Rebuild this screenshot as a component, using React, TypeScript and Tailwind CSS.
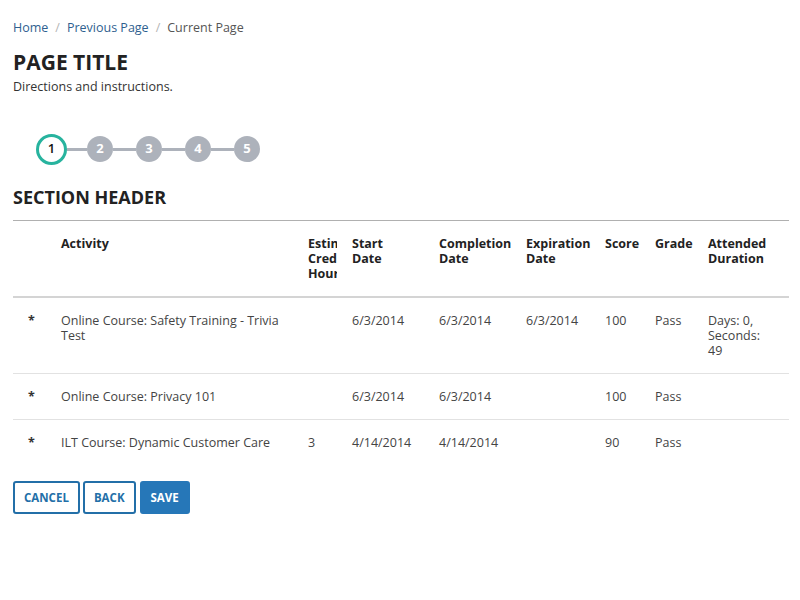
import { Fragment } from "react";

const steps = [1, 2, 3, 4, 5];

const rows = [
  {
    activity: "Online Course: Safety Training - Trivia Test",
    credit: "",
    start: "6/3/2014",
    completion: "6/3/2014",
    expiration: "6/3/2014",
    score: "100",
    grade: "Pass",
    duration: "Days: 0, Seconds: 49",
  },
  {
    activity: "Online Course: Privacy 101",
    credit: "",
    start: "6/3/2014",
    completion: "6/3/2014",
    expiration: "",
    score: "100",
    grade: "Pass",
    duration: "",
  },
  {
    activity: "ILT Course: Dynamic Customer Care",
    credit: "3",
    start: "4/14/2014",
    completion: "4/14/2014",
    expiration: "",
    score: "90",
    grade: "Pass",
    duration: "",
  },
];

const widths = [33, 247, 44, 87, 87, 79, 50, 53, 96];

const th = "py-[15px] pl-[15px] pr-[12px]";
const td = "py-[15px] pl-[15px]";

export default function App() {
  return (
    <div className="min-h-screen bg-white pl-[13px] pr-[11px] text-[#333] [font-family:'Open_Sans',sans-serif]">
      <nav className="flex h-[54px] items-start gap-[7px] pt-[19px] text-[12.5px] leading-[17px]">
        <a className="text-[#2f5f8f]">Home</a>
        <span className="text-[#b5b5b5]">/</span>
        <a className="text-[#2f5f8f]">Previous Page</a>
        <span className="text-[#b5b5b5]">/</span>
        <span className="text-[#555]">Current Page</span>
      </nav>

      <h1 className="text-[21px] font-bold leading-[17px] text-[#222]">PAGE TITLE</h1>
      <p className="mt-[7px] text-[12.5px] leading-[17px]">Directions and instructions.</p>

      <div className="mt-[37px] ml-[23px] flex h-[34px] items-center">
        {steps.map((s, i) => (
          <Fragment key={s}>
            {i > 0 && <div className={`h-[3px] bg-[#adb2bb] ${i === 1 ? "w-[20px]" : "w-[23px]"}`} />}
            {i === 0 ? (
              <div className="flex size-[31px] items-center justify-center rounded-full border-[3px] border-[#27b39e] bg-white text-[13px] font-semibold text-[#111]">
                {s}
              </div>
            ) : (
              <div className="flex size-[26px] items-center justify-center rounded-full bg-[#adb2bb] text-[13px] font-bold text-white">
                {s}
              </div>
            )}
          </Fragment>
        ))}
      </div>

      <h2 className="mt-[21px] text-[18px] font-bold leading-[20px] text-[#222]">SECTION HEADER</h2>

      <table className="mt-[13px] w-full table-fixed border-collapse text-[12.5px] leading-[15px]">
        <colgroup>
          {widths.map((w, i) => (
            <col key={i} style={{ width: w }} />
          ))}
        </colgroup>
        <thead>
          <tr className="border-t border-b-2 border-t-[#b0b0b0] border-b-[#d4d4d4] text-left align-top font-bold text-[#222]">
            <th className="py-[15px]" />
            <th className={th}>Activity</th>
            <th className="overflow-hidden py-[15px] pl-[15px] pr-0">Estimated Credit Hours</th>
            <th className={th}>Start Date</th>
            <th className={th}>Completion Date</th>
            <th className={th}>Expiration Date</th>
            <th className={th}>Score</th>
            <th className={th}>Grade</th>
            <th className={th}>Attended Duration</th>
          </tr>
        </thead>
        <tbody>
          {rows.map((r, i) => (
            <tr key={i} className={`align-top text-[#444] ${i < rows.length - 1 ? "border-b border-[#e2e2e2]" : ""}`}>
              <td className={`${td} font-bold text-[#333]`}>*</td>
              <td className={td}>{r.activity}</td>
              <td className={td}>{r.credit}</td>
              <td className={td}>{r.start}</td>
              <td className={td}>{r.completion}</td>
              <td className={td}>{r.expiration}</td>
              <td className={td}>{r.score}</td>
              <td className={td}>{r.grade}</td>
              <td className={`${td} pr-[20px]`}>{r.duration}</td>
            </tr>
          ))}
        </tbody>
      </table>

      <div className="mt-[16px] flex gap-[3px]">
        <button className="h-[33px] rounded-[3px] border-2 border-[#236fa8] bg-white px-[9px] text-[11.5px] font-bold text-[#236fa8]">
          CANCEL
        </button>
        <button className="h-[33px] rounded-[3px] border-2 border-[#236fa8] bg-white px-[9px] text-[11.5px] font-bold text-[#236fa8]">
          BACK
        </button>
        <button className="ml-[1px] h-[33px] rounded-[3px] border-2 border-[#2677b8] bg-[#2677b8] px-[9px] text-[11.5px] font-bold text-white">
          SAVE
        </button>
      </div>
    </div>
  );
}
